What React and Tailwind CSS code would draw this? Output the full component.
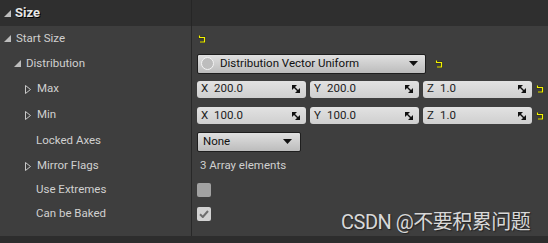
import React from 'react';

const font = { fontFamily: 'Roboto, "Noto Sans CJK SC", sans-serif' };

function Expanded({ className = '' }) {
  return (
    <svg width="7" height="7" viewBox="0 0 7 7" className={className}>
      <polygon points="7,0 7,7 0,7" fill="#bdbdbd" />
    </svg>
  );
}

function Collapsed() {
  return (
    <svg width="6" height="9" viewBox="0 0 6 9">
      <polygon points="0.5,0.5 5.5,4.5 0.5,8.5" fill="none" stroke="#c8c8c8" strokeWidth="1" />
    </svg>
  );
}

function Reset() {
  return (
    <svg width="8" height="8" viewBox="0 0 8 8" className="shrink-0">
      <path d="M1.5 0.5 V2.5 H6.5 V7 H2" fill="none" stroke="#1a1a00" strokeWidth="2" opacity="0.5" />
      <path d="M1.5 0.5 V2.5 H6.5 V7 H2" fill="none" stroke="#f2f200" strokeWidth="1.2" />
    </svg>
  );
}

function Resize() {
  return (
    <svg width="8" height="8" viewBox="0 0 8 8">
      <polygon points="0,0 5,0 0,5" fill="#111" />
      <polygon points="8,8 3,8 8,3" fill="#111" />
      <line x1="1" y1="1" x2="7" y2="7" stroke="#111" strokeWidth="1.4" />
    </svg>
  );
}

function Arrow() {
  return (
    <svg width="9" height="5" viewBox="0 0 9 5">
      <polygon points="0,0 9,0 4.5,5" fill="#111" />
    </svg>
  );
}

function Row({ h, indent, icon, label, children }) {
  return (
    <div className={`flex ${h}`}>
      <div className="w-[192px] shrink-0 flex items-center border-r border-[#282828]" style={{ paddingLeft: indent }}>
        <div className="w-[12px] flex items-center">{icon}</div>
        <span className="text-[11.5px] text-[#d0d0d0]">{label}</span>
      </div>
      <div className="flex-1 flex items-center pl-[5px]">{children}</div>
    </div>
  );
}

function VecBox({ axis, value }) {
  return (
    <div className="w-[109px] h-[17px] rounded-[3px] bg-gradient-to-b from-[#e2e2e2] to-[#cfcfcf] flex items-center pl-[4px] pr-[6px] text-[11.5px] text-[#1c1c1c]">
      <span className="w-[13px]">{axis}</span>
      <span className="flex-1">{value}</span>
      <Resize />
    </div>
  );
}

export default function App() {
  return (
    <div className="w-[548px] h-[243px] bg-[#3e3e3e] relative overflow-hidden" style={font}>
      {/* header */}
      <div className="flex h-[26px] bg-[#2f2f2f]">
        <div className="w-[192px] flex items-center pl-[4px] border-r border-[#262626]">
          <Expanded className="mr-[4px]" />
          <span className="text-[13px] font-bold text-[#e6e6e6]" style={{ textShadow: '1px 1px 0 #000' }}>Size</span>
        </div>
        <div className="flex-1" />
      </div>

      <Row h="h-[25px]" indent={4} icon={<Expanded />} label="Start Size">
        <div className="pl-[1px]"><Reset /></div>
      </Row>

      <Row h="h-[25px]" indent={14} icon={<Expanded />} label="Distribution">
        <div className="w-[229px] h-[20px] rounded-[2px] border border-[#1e1e1e] bg-gradient-to-b from-[#e0e0e0] to-[#bcbcbc] flex items-center pl-[3px] pr-[7px]">
          <div className="w-[13px] h-[13px] rounded-full border border-[#f4f4f4] bg-[#bdbdbd] mr-[6px]" />
          <span className="flex-1 text-[11.5px] text-[#111]">Distribution Vector Uniform</span>
          <Arrow />
        </div>
        <div className="ml-[9px]"><Reset /></div>
      </Row>

      <Row h="h-[26px]" indent={25} icon={<Collapsed />} label="Max">
        <div className="flex gap-[4px] items-center">
          <VecBox axis="X" value="200.0" />
          <VecBox axis="Y" value="200.0" />
          <VecBox axis="Z" value="1.0" />
          <Reset />
        </div>
      </Row>

      <Row h="h-[26px]" indent={25} icon={<Collapsed />} label="Min">
        <div className="flex gap-[4px] items-center pt-[1px]">
          <VecBox axis="X" value="100.0" />
          <VecBox axis="Y" value="100.0" />
          <VecBox axis="Z" value="1.0" />
          <Reset />
        </div>
      </Row>

      <Row h="h-[26px]" indent={24} icon={null} label="Locked Axes">
        <div className="w-[104px] h-[20px] rounded-[2px] border border-[#1e1e1e] bg-gradient-to-b from-[#e0e0e0] to-[#bcbcbc] flex items-center pl-[5px] pr-[8px] mt-[1px]">
          <span className="flex-1 text-[11.5px] text-[#111]">None</span>
          <Arrow />
        </div>
      </Row>

      <Row h="h-[24px]" indent={25} icon={<Collapsed />} label="Mirror Flags">
        <span className="pl-[3px] text-[11.5px] text-[#d0d0d0]">3 Array elements</span>
      </Row>

      <Row h="h-[24px]" indent={24} icon={null} label="Use Extremes">
        <div className="w-[14px] h-[14px] rounded-[2px] bg-[#a2a2a2]" />
      </Row>

      <Row h="h-[24px]" indent={24} icon={null} label="Can be Baked">
        <div className="w-[14px] h-[14px] rounded-[2px] bg-[#d2d2d2] flex items-center justify-center">
          <svg width="10" height="8" viewBox="0 0 10 8">
            <path d="M1 4.2 L3.8 7 L9 1" fill="none" stroke="#6e6e6e" strokeWidth="2" />
          </svg>
        </div>
      </Row>

      <div className="flex h-[10px]">
        <div className="w-[192px] border-r border-[#282828]" />
      </div>
      <div className="h-[7px] bg-[#2d2d2d]" />

      {/* watermark */}
      <div
        className="absolute left-[341px] top-[211px] text-[20px] leading-[23px] tracking-[-0.5px] text-[#d8d8d8] whitespace-nowrap"
        style={{ textShadow: '1px 1px 1px #222' }}
      >
        CSDN @不要积累问题
      </div>
    </div>
  );
}
